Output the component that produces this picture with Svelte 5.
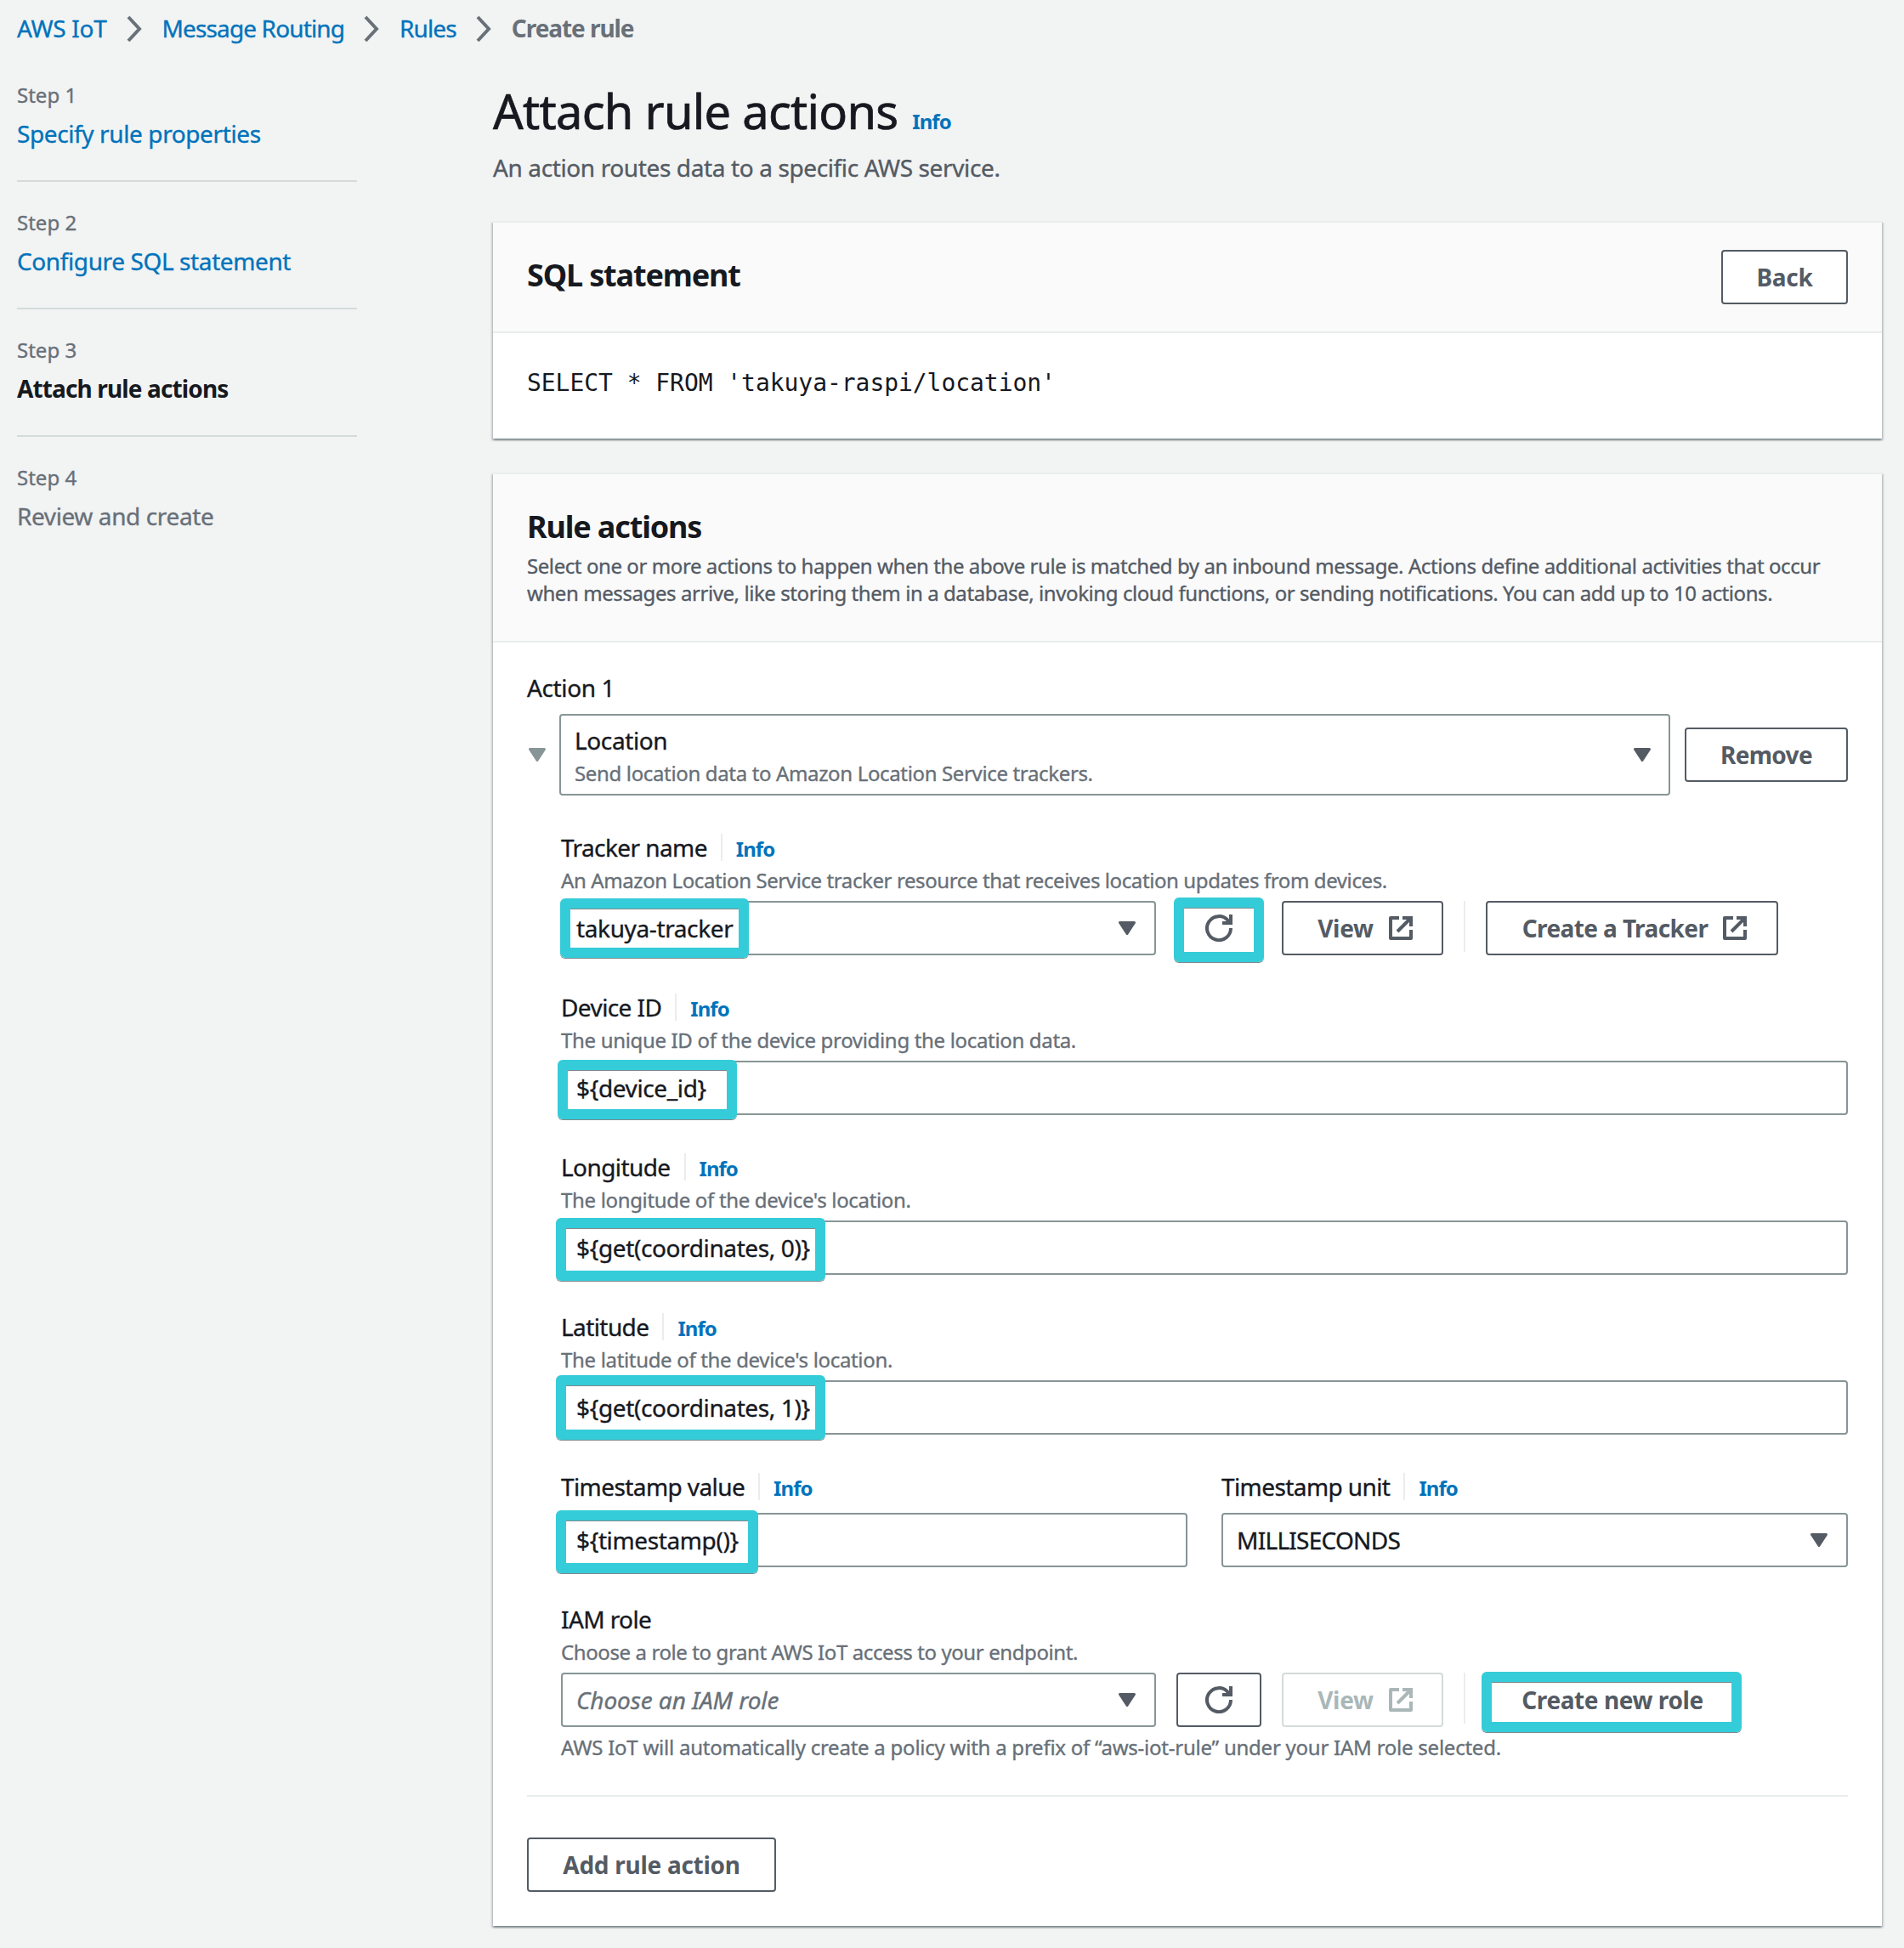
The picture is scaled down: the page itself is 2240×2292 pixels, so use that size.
<!-- Create rule wizard, step 3: attach rule actions to an IoT message rule. -->
<script lang="ts">
  interface Step {
    title: string;
    state: 'done' | 'active' | 'upcoming';
  }

  interface TextField {
    id: string;
    label: string;
    hint: string;
    value: string;
  }

  const crumbs = ['AWS IoT', 'Message Routing', 'Rules'];

  const steps: Step[] = [
    { title: 'Specify rule properties', state: 'done' },
    { title: 'Configure SQL statement', state: 'done' },
    { title: 'Attach rule actions', state: 'active' },
    { title: 'Review and create', state: 'upcoming' },
  ];

  const textFields: TextField[] = [
    {
      id: 'device',
      label: 'Device ID',
      hint: 'The unique ID of the device providing the location data.',
      value: '${device_id}',
    },
    {
      id: 'longitude',
      label: 'Longitude',
      hint: "The longitude of the device's location.",
      value: '${get(coordinates, 0)}',
    },
    {
      id: 'latitude',
      label: 'Latitude',
      hint: "The latitude of the device's location.",
      value: '${get(coordinates, 1)}',
    },
  ];
</script>

{#snippet caret()}
  <svg class="caret" viewBox="0 0 20 16" aria-hidden="true">
    <path d="M1.5 1.5h17L10 14.5z" />
  </svg>
{/snippet}

{#snippet refreshIcon()}
  <svg class="icon" viewBox="0 0 16 16" aria-hidden="true">
    <path d="M10 5h5V0" />
    <path d="M15 8a7 7 0 1 1-1.6-4.4L15 5" />
  </svg>
{/snippet}

{#snippet externalIcon()}
  <svg class="icon" viewBox="0 0 16 16" aria-hidden="true">
    <path d="M7 2H2v12h12V9" stroke-linejoin="round" />
    <path d="M9 2h5v5M14 2 6 10" />
  </svg>
{/snippet}

{#snippet label(text: string)}
  <div class="label">
    <span>{text}</span>
    <i class="label-rule"></i>
    <a class="info" href="#info">Info</a>
  </div>
{/snippet}

<div class="page">
  <nav class="crumbs" aria-label="Breadcrumbs">
    {#each crumbs as crumb (crumb)}
      <a href="#{crumb}">{crumb}</a>
      <svg class="chevron" viewBox="0 0 18 32" aria-hidden="true">
        <path d="M2 2l13 14L2 30" />
      </svg>
    {/each}
    <span class="crumb-current">Create rule</span>
  </nav>

  <div class="columns">
    <ol class="steps">
      {#each steps as step, i (step.title)}
        <li class="step" data-state={step.state}>
          <span class="step-number">Step {i + 1}</span>
          <span class="step-title">{step.title}</span>
        </li>
      {/each}
    </ol>

    <main class="main">
      <header class="page-header">
        <h1>Attach rule actions <a class="info" href="#info">Info</a></h1>
        <p>An action routes data to a specific AWS service.</p>
      </header>

      <section class="card">
        <header class="card-header card-header-row">
          <h2>SQL statement</h2>
          <button type="button" class="btn back">Back</button>
        </header>
        <div class="sql">
          <code>SELECT * FROM 'takuya-raspi/location'</code>
        </div>
      </section>

      <section class="card">
        <header class="card-header card-header-text">
          <h2>Rule actions</h2>
          <p>
            Select one or more actions to happen when the above rule is matched by an inbound message. Actions define additional activities that occur<br />
            when messages arrive, like storing them in a database, invoking cloud functions, or sending notifications. You can add up to 10 actions.
          </p>
        </header>

        <div class="actions">
          <div class="action-title">Action 1</div>
          <div class="action-row">
            <span class="toggle">{@render caret()}</span>
            <div class="control action-select">
              <div class="option">
                <span class="option-title">Location</span>
                <span class="option-hint">Send location data to Amazon Location Service trackers.</span>
              </div>
              {@render caret()}
            </div>
            <button type="button" class="btn remove">Remove</button>
          </div>

          <div class="fields">
            <div class="field">
              {@render label('Tracker name')}
              <p class="hint hint-long">An Amazon Location Service tracker resource that receives location updates from devices.</p>
              <div class="control-row">
                <div class="control select">
                  <span>takuya-tracker</span>
                  {@render caret()}
                  <i class="mark mark-tracker"></i>
                </div>
                <button type="button" class="btn refresh" aria-label="Refresh">
                  {@render refreshIcon()}
                  <i class="mark mark-refresh"></i>
                </button>
                <button type="button" class="btn view">View {@render externalIcon()}</button>
                <i class="row-rule"></i>
                <button type="button" class="btn create-tracker">Create a Tracker {@render externalIcon()}</button>
              </div>
            </div>

            {#each textFields as field (field.id)}
              <div class="field">
                {@render label(field.label)}
                <p class="hint">{field.hint}</p>
                <div class="control">
                  <span>{field.value}</span>
                  <i class="mark mark-{field.id}"></i>
                </div>
              </div>
            {/each}

            <div class="field-pair">
              <div class="field">
                {@render label('Timestamp value')}
                <div class="control no-hint">
                  <span>{'${timestamp()}'}</span>
                  <i class="mark mark-timestamp"></i>
                </div>
              </div>
              <div class="field">
                {@render label('Timestamp unit')}
                <div class="control no-hint">
                  <span class="caps">MILLISECONDS</span>
                  {@render caret()}
                </div>
              </div>
            </div>

            <div class="field">
              <div class="label"><span>IAM role</span></div>
              <p class="hint hint-long">Choose a role to grant AWS IoT access to your endpoint.</p>
              <div class="control-row">
                <div class="control select">
                  <span class="placeholder">Choose an IAM role</span>
                  {@render caret()}
                </div>
                <button type="button" class="btn refresh" aria-label="Refresh">{@render refreshIcon()}</button>
                <button type="button" class="btn view" disabled>View {@render externalIcon()}</button>
                <i class="row-rule"></i>
                <button type="button" class="btn create-role">
                  Create new role
                  <i class="mark mark-role"></i>
                </button>
              </div>
              <p class="hint note">AWS IoT will automatically create a policy with a prefix of “aws-iot-rule” under your IAM role selected.</p>
            </div>
          </div>

          <hr />
          <button type="button" class="btn add">Add rule action</button>
        </div>
      </section>
    </main>
  </div>
</div>

<style>
  :global(body) {
    margin: 0;
    background: #f2f3f3;
  }

  .page {
    --ink: #16191f;
    --body: #545b64;
    --muted: #687078;
    --link: #0073bb;
    --line: #eaeded;
    --edge: #879596;
    --mark: #35ccd9;
    box-sizing: border-box;
    width: 2240px;
    height: 2292px;
    padding: 11px 26px 0 20px;
    overflow: hidden;
    background: #f2f3f3;
    color: var(--ink);
    font-family: 'Noto Sans', 'Open Sans', sans-serif;
    font-size: 28px;
    line-height: 44px;
    letter-spacing: -.38px;
    -webkit-text-stroke: .35px currentColor;
  }
  .page * { box-sizing: border-box; }

  h1, h2, p, ol {
    margin: 0;
    padding: 0;
    font-weight: 400;
  }
  a {
    color: var(--link);
    text-decoration: none;
  }
  .info,
  .crumb-current,
  .card-header h2,
  .btn,
  .step[data-state='active'] .step-title {
    -webkit-text-stroke-width: 0;
  }
  .info {
    font-size: 24px;
    font-weight: 700;
    line-height: 32px;
    letter-spacing: -.04em;
  }

  .crumbs {
    display: flex;
    align-items: center;
    height: 44px;
    white-space: nowrap;
  }
  .crumbs a { letter-spacing: -.031em; }
  .crumbs a:first-child { letter-spacing: -.01em; }
  .chevron {
    width: 18px;
    height: 32px;
    margin: 2px 24px 0 23px;
    fill: none;
    stroke: var(--muted);
    stroke-width: 4;
  }
  .crumb-current {
    color: var(--muted);
    font-weight: 700;
    letter-spacing: -.038em;
  }

  .columns {
    display: flex;
    align-items: flex-start;
    gap: 160px;
    padding-top: 41px;
  }

  .steps {
    width: 400px;
    flex: none;
    list-style: none;
  }
  .step {
    display: flex;
    flex-direction: column;
    gap: 7px;
    padding-bottom: 33px;
  }
  .step + .step {
    padding-top: 32px;
    border-top: 2px solid #d5dbdb;
  }
  .step-number {
    color: var(--muted);
    font-size: 24px;
    line-height: 32px;
    letter-spacing: 0;
  }
  .step-title {
    color: var(--muted);
    letter-spacing: -.014em;
  }
  .step[data-state='done'] .step-title { color: var(--link); }
  .step[data-state='active'] .step-title {
    color: var(--ink);
    font-weight: 700;
    letter-spacing: -.031em;
  }

  .main {
    flex: 1;
    min-width: 0;
  }
  .page-header { padding-bottom: 41px; }
  .page-header h1 {
    font-size: 56px;
    line-height: 68px;
    letter-spacing: -.013em;
    -webkit-text-stroke-width: .7px;
  }
  .page-header .info { margin-left: 3px; }
  .page-header p {
    margin-top: 11px;
    color: var(--body);
  }

  .card {
    border-top: 2px solid var(--line);
    background: #fff;
    box-shadow:
      0 2px 2px rgba(0, 28, 36, .3),
      2px 2px 2px rgba(0, 28, 36, .15),
      -2px 2px 2px rgba(0, 28, 36, .15);
  }
  .card + .card { margin-top: 40px; }
  .card-header {
    border-bottom: 2px solid var(--line);
    background: #fafafa;
  }
  .card-header h2 {
    font-size: 36px;
    font-weight: 700;
    letter-spacing: -.032em;
  }
  .card-header-row {
    display: flex;
    align-items: center;
    justify-content: space-between;
    height: 130px;
    padding: 0 40px;
  }
  .card-header-row h2 { padding-bottom: 4px; }
  .card-header-text { padding: 40px 40px 40px; }
  .card-header-text p {
    margin-top: 8px;
    color: var(--body);
    font-size: 24px;
    line-height: 32px;
    letter-spacing: -.42px;
    white-space: nowrap;
  }
  .sql { padding: 37px 40px 43px; }
  .sql code {
    display: block;
    font-family: 'DejaVu Sans Mono', monospace;
    font-size: 28px;
    letter-spacing: -.05px;
    -webkit-text-stroke-width: 0;
  }

  .btn {
    position: relative;
    display: flex;
    flex: none;
    align-items: center;
    justify-content: center;
    height: 64px;
    padding: 0;
    border: 2px solid var(--body);
    border-radius: 4px;
    background: #fff;
    color: var(--body);
    font-family: inherit;
    font-size: 28px;
    font-weight: 700;
    line-height: 44px;
    letter-spacing: -.01em;
    white-space: nowrap;
  }
  .btn:disabled {
    border-color: #d5dbdb;
    color: #aab7b8;
  }
  .back { width: 149px; }
  .remove { width: 192px; letter-spacing: -.025em; }
  .add { width: 293px; }
  .refresh { width: 100px; margin-left: 24px; }
  .view { width: 190px; margin-left: 24px; padding-left: 8px; gap: 16px; }
  .create-tracker { width: 344px; padding-left: 8px; gap: 16px; letter-spacing: -.021em; }
  .create-role { width: 296px; padding-left: 2px; letter-spacing: -.015em; }

  .icon {
    width: 32px;
    height: 32px;
    fill: none;
    stroke: currentColor;
    stroke-width: 2;
  }
  .caret {
    flex: none;
    width: 20px;
    height: 16px;
    fill: var(--body);
    stroke: var(--body);
    stroke-width: 3;
    stroke-linejoin: round;
  }

  .actions { padding: 31px 40px 40px; }
  .action-row {
    display: flex;
    align-items: center;
    margin-top: 9px;
  }
  .toggle {
    display: flex;
    width: 38px;
    padding-left: 2px;
  }
  .toggle .caret {
    fill: var(--edge);
    stroke: var(--edge);
  }

  .control {
    position: relative;
    display: flex;
    align-items: center;
    justify-content: space-between;
    height: 64px;
    padding: 0 22px 0 16px;
    border: 2px solid var(--edge);
    border-radius: 4px;
    background: #fff;
    white-space: nowrap;
  }
  .action-select {
    flex: 1;
    height: 96px;
    margin-right: 17px;
    padding-right: 21px;
  }
  .option {
    display: flex;
    flex-direction: column;
    gap: 4px;
    padding-top: 2px;
  }
  .option-title { line-height: 38px; }
  .option-hint {
    color: var(--muted);
    font-size: 24px;
    line-height: 32px;
    letter-spacing: -.35px;
  }

  .fields {
    display: flex;
    flex-direction: column;
    gap: 39px;
    margin: 39px 0 0 40px;
  }
  .label {
    display: flex;
    align-items: center;
    height: 44px;
    letter-spacing: -.021em;
  }
  .label-rule {
    width: 2px;
    height: 32px;
    margin: 0 16px;
    background: var(--line);
  }
  .label .info { margin-top: 3px; }
  .hint {
    margin: 1px 0 8px;
    color: var(--muted);
    font-size: 24px;
    line-height: 32px;
    letter-spacing: -.33px;
    white-space: nowrap;
  }
  .hint-long { letter-spacing: -.4px; }
  .note {
    margin: 8px 0 0;
    letter-spacing: -.24px;
  }
  .no-hint { margin-top: 9px; }
  .control-row {
    display: flex;
    align-items: center;
  }
  .select { width: 700px; }
  .row-rule {
    width: 2px;
    height: 60px;
    margin: 0 24px;
    align-self: flex-start;
    background: var(--line);
  }
  .field-pair {
    display: grid;
    grid-template-columns: 1fr 1fr;
    gap: 40px;
  }
  .caps { letter-spacing: -.026em; }
  .placeholder {
    color: var(--muted);
    font-style: italic;
    letter-spacing: -.1px;
  }

  /* Walkthrough highlights, drawn over the controls they point at. */
  .mark {
    position: absolute;
    border: 12px solid var(--mark);
    border-radius: 6px;
    box-shadow: 0 1px 0 #7d8a8c, inset 0 1px 0 #7d8a8c;
    pointer-events: none;
  }
  .mark-tracker { left: -3px; top: -5px; width: 222px; height: 70px; }
  .mark-refresh { left: -5px; top: -6px; width: 106px; height: 76px; }
  .mark-device { left: -6px; top: -3px; width: 211px; height: 70px; }
  .mark-longitude { left: -8px; top: -5px; width: 317px; height: 74px; }
  .mark-latitude { left: -8px; top: -8px; width: 317px; height: 76px; }
  .mark-timestamp { left: -8px; top: -5px; width: 238px; height: 74px; }
  .mark-role { left: -7px; top: -3px; width: 306px; height: 71px; }

  hr {
    height: 2px;
    margin: 40px 0 48px;
    border: 0;
    background: var(--line);
  }
</style>
